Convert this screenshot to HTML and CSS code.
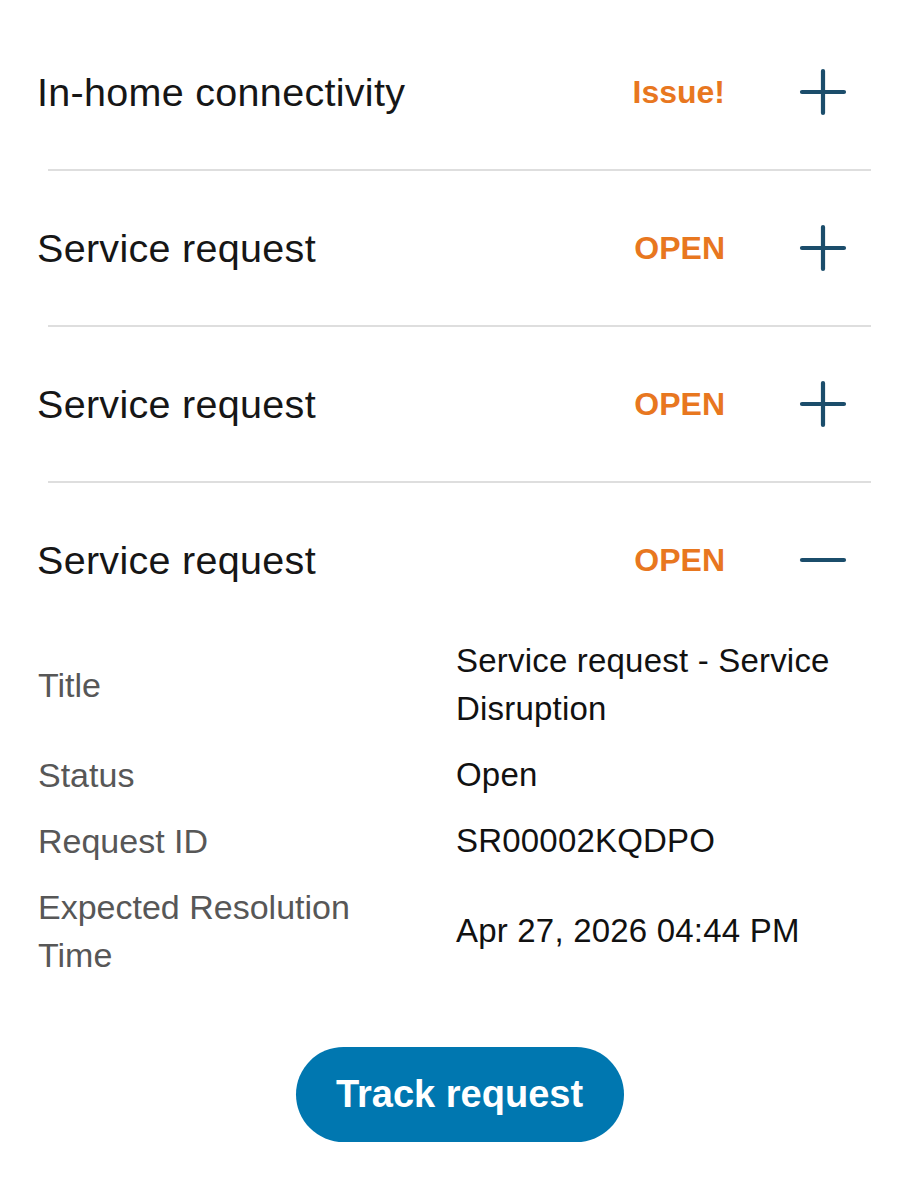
FILE: index.html
```html
<!DOCTYPE html>
<html lang="en">
<head>
    <meta charset="UTF-8">
    <meta name="viewport" content="width=device-width, initial-scale=1.0">
    <title>Service status</title>
    <link rel="stylesheet" href="styles.css">
</head>
<body>
<div class="container">

    <div class="item">
        <div class="item-header">
            <span class="item-title">In-home connectivity</span>
            <span class="item-status">Issue!</span>
            <svg class="toggle" viewBox="0 0 48 48"><path d="M24 3v42M3 24h42"/></svg>
        </div>
    </div>
    <div class="divider"></div>

    <div class="item">
        <div class="item-header">
            <span class="item-title">Service request</span>
            <span class="item-status">OPEN</span>
            <svg class="toggle" viewBox="0 0 48 48"><path d="M24 3v42M3 24h42"/></svg>
        </div>
    </div>
    <div class="divider"></div>

    <div class="item">
        <div class="item-header">
            <span class="item-title">Service request</span>
            <span class="item-status">OPEN</span>
            <svg class="toggle" viewBox="0 0 48 48"><path d="M24 3v42M3 24h42"/></svg>
        </div>
    </div>
    <div class="divider"></div>

    <div class="item open">
        <div class="item-header">
            <span class="item-title">Service request</span>
            <span class="item-status">OPEN</span>
            <svg class="toggle" viewBox="0 0 48 48"><path d="M3 24h42"/></svg>
        </div>

        <div class="details">
            <div class="detail-row">
                <div class="detail-label">Title</div>
                <div class="detail-value">Service request - Service Disruption</div>
            </div>
            <div class="detail-row">
                <div class="detail-label">Status</div>
                <div class="detail-value">Open</div>
            </div>
            <div class="detail-row">
                <div class="detail-label">Request ID</div>
                <div class="detail-value">SR00002KQDPO</div>
            </div>
            <div class="detail-row">
                <div class="detail-label">Expected Resolution Time</div>
                <div class="detail-value">Apr 27, 2026 04:44 PM</div>
            </div>
        </div>

        <div class="actions">
            <button class="track-button">Track request</button>
        </div>
    </div>

</div>
</body>
</html>
```

FILE: styles.css
```css
body {
    font-family: "Liberation Sans", Arial, sans-serif;
    margin: 0;
    padding: 0;
    background-color: #fff;
    color: #161616;
}

.container {
    padding-top: 15px;
}

.item-header {
    display: flex;
    align-items: center;
    height: 154px;
    padding: 0 72px 0 37px;
}

.item-title {
    flex: 1;
    font-size: 39.5px;
    letter-spacing: 0.3px;
    color: #161616;
}

.item-status {
    font-size: 32px;
    font-weight: bold;
    color: #e8771f;
    margin-right: 74px;
}

.toggle {
    width: 48px;
    height: 48px;
    fill: none;
    stroke: #1b4d6b;
    stroke-width: 4.2;
    stroke-linecap: round;
}

.divider {
    height: 2px;
    background-color: #dedede;
    margin: 0 48px;
}

.details {
    display: flex;
    flex-direction: column;
    gap: 18px;
    padding: 0 30px 0 38px;
    line-height: 48px;
}

.detail-row {
    display: flex;
    align-items: center;
}

.detail-label {
    width: 418px;
    padding-right: 60px;
    box-sizing: border-box;
    font-size: 34px;
    color: #575757;
}

.detail-value {
    flex: 1;
    font-size: 33px;
    letter-spacing: 0.2px;
    color: #111;
}

.actions {
    display: flex;
    justify-content: center;
    margin-top: 68px;
}

.track-button {
    background-color: #0077b0;
    color: #fff;
    border: none;
    width: 328px;
    height: 95px;
    border-radius: 48px;
    font-family: "Liberation Sans", Arial, sans-serif;
    font-size: 38px;
    font-weight: bold;
    cursor: pointer;
}
```
